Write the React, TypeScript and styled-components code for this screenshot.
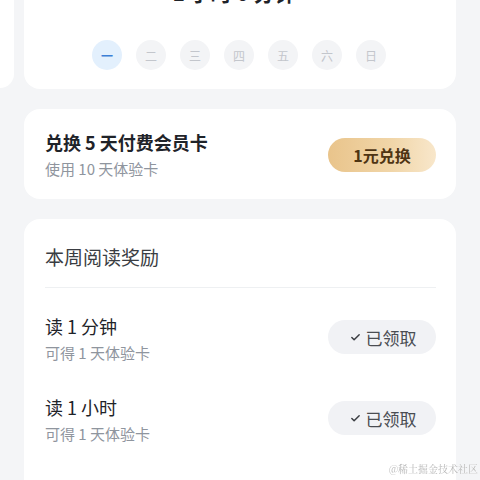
import React from 'react';
import styled, { createGlobalStyle } from 'styled-components';
import { Check } from 'lucide-react';

const weekDays = ['一', '二', '三', '四', '五', '六', '日'];

const rewards = [
  { id: 1, title: '读 1 分钟', desc: '可得 1 天体验卡', claimed: true },
  { id: 2, title: '读 1 小时', desc: '可得 1 天体验卡', claimed: true },
  { id: 3, title: '读 3 小时', desc: '可得 2 天体验卡', claimed: false },
];

const GlobalStyle = createGlobalStyle`
  html, body {
    margin: 0;
    padding: 0;
    background: #f4f5f7;
    overflow: hidden;
  }
  body {
    font-family: "Noto Sans CJK SC", "Noto Sans", sans-serif;
    -webkit-font-smoothing: antialiased;
  }
`;

const App: React.FC = () => {
  return (
    <>
      <GlobalStyle />
      <Page>
        <Carousel>
          <PeekCard />
          <WeekCard>
            <Duration>1 小时 0 分钟</Duration>
            <DayRow>
              {weekDays.map((d, i) => (
                <DayDot key={d} active={i === 0}>
                  {d}
                </DayDot>
              ))}
            </DayRow>
          </WeekCard>
        </Carousel>

        <Section>
          <Card>
            <Row>
              <TextBlock>
                <ExchangeTitle>兑换 5 天付费会员卡</ExchangeTitle>
                <SubText>使用 10 天体验卡</SubText>
              </TextBlock>
              <GoldButton>1元兑换</GoldButton>
            </Row>
          </Card>

          <RewardCard>
            <CardHeader>本周阅读奖励</CardHeader>
            <Divider />
            {rewards.map(r => (
              <RewardRow key={r.id}>
                <TextBlock>
                  <RewardTitle>{r.title}</RewardTitle>
                  <SubText>{r.desc}</SubText>
                </TextBlock>
                <ClaimButton>
                  {r.claimed && <Check size={11} strokeWidth={3.2} />}
                  {r.claimed ? '已领取' : '去阅读'}
                </ClaimButton>
              </RewardRow>
            ))}
          </RewardCard>
        </Section>
      </Page>
      <Watermark>@稀土掘金技术社区</Watermark>
    </>
  );
};

const Page = styled.div`
  margin-top: -47px;
  display: flex;
  flex-direction: column;
  gap: 20px;
`;

const Carousel = styled.div`
  display: grid;
  grid-template-columns: 14px 1fr;
  gap: 10px;
  padding-right: 24px;
`;

const PeekCard = styled.div`
  background: #fff;
  border-radius: 0 14px 14px 0;
  margin-bottom: 1px;
`;

const WeekCard = styled.div`
  background: #fff;
  border-radius: 16px;
  padding: 24px 0 19px;
  display: flex;
  flex-direction: column;
  align-items: center;
`;

const Duration = styled.div`
  font-size: 21px;
  font-weight: 700;
  line-height: 30px;
  color: #1f2329;
  padding-right: 12px;
`;

const DayRow = styled.div`
  margin-top: 33px;
  display: flex;
  gap: 14px;
  padding-right: 2px;
`;

const DayDot = styled.div<{ active?: boolean }>`
  width: 30px;
  height: 30px;
  border-radius: 50%;
  display: flex;
  align-items: center;
  justify-content: center;
  font-size: 12px;
  background: ${p => (p.active ? '#e3f0fd' : '#f3f4f6')};
  color: ${p => (p.active ? '#3d7fd6' : '#c3c6cc')};
  font-weight: ${p => (p.active ? 700 : 400)};
`;

const Section = styled.div`
  display: flex;
  flex-direction: column;
  gap: 20px;
  padding: 0 24px;
`;

const Card = styled.div`
  background: #fff;
  border-radius: 16px;
  padding: 21px 20px 20px 21px;
`;

const Row = styled.div`
  display: flex;
  align-items: center;
  justify-content: space-between;
`;

const TextBlock = styled.div`
  display: flex;
  flex-direction: column;
  gap: 5px;
`;

const ExchangeTitle = styled.div`
  font-size: 18px;
  line-height: 24px;
  font-weight: 700;
  color: #1f2329;
`;

const SubText = styled.div`
  font-size: 15px;
  line-height: 20px;
  color: #8f959e;
`;

const GoldButton = styled.button`
  width: 108px;
  height: 34px;
  border: none;
  border-radius: 17px;
  background: linear-gradient(90deg, #e9c48b 0%, #f1d6a9 60%, #f8e7cb 100%);
  color: #4e3413;
  font-family: inherit;
  font-size: 16px;
  font-weight: 600;
  padding: 0;
`;

const RewardCard = styled.div`
  background: #fff;
  border-radius: 16px 16px 0 0;
  padding: 26px 20px 0 21px;
  height: 320px;
`;

const CardHeader = styled.div`
  font-size: 19px;
  line-height: 24px;
  color: #3a3d42;
`;

const Divider = styled.div`
  height: 1px;
  background: #eef0f2;
  margin-top: 18px;
`;

const RewardRow = styled.div`
  height: 81px;
  box-sizing: border-box;
  padding-top: 26px;
  display: flex;
  align-items: flex-start;
  justify-content: space-between;
`;

const RewardTitle = styled.div`
  font-size: 18px;
  line-height: 24px;
  color: #1f2329;
`;

const ClaimButton = styled.button`
  margin-top: 6px;
  width: 108px;
  height: 34px;
  border: none;
  border-radius: 17px;
  background: #f1f2f5;
  color: #4a4d52;
  font-family: inherit;
  font-size: 17px;
  display: flex;
  align-items: center;
  justify-content: center;
  gap: 5px;
  padding: 0 0 0 2px;

  svg {
    color: #3a3d42;
  }
`;

const Watermark = styled.div`
  position: fixed;
  right: 2px;
  bottom: 4px;
  font-family: "Noto Serif CJK SC", "Noto Sans CJK SC", serif;
  font-size: 10px;
  color: #b8b8b8;
  text-shadow: 0 0 1px #fff;
`;

export default App;
